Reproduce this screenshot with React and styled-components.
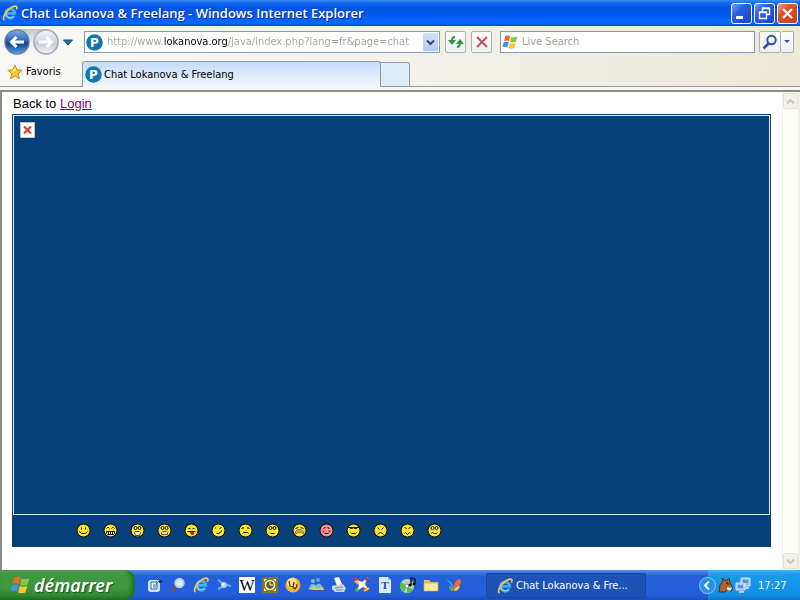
import React from 'react';
import styled, { createGlobalStyle } from 'styled-components';

const GlobalStyle = createGlobalStyle`
  * {
    box-sizing: border-box;
  }

  body {
    margin: 0;
    font-family: 'DejaVu Sans Condensed', 'DejaVu Sans', sans-serif;
    font-size: 11px;
    color: #000;
  }

  button {
    font: inherit;
    padding: 0;
    border: none;
    background: none;
  }

  svg {
    display: block;
    flex: none;
  }
`;

const Desktop = styled.div`
  display: flex;
  flex-direction: column;
  min-height: 100vh;
  background: white;
`;

const TitleBar = styled.header`
  display: flex;
  align-items: center;
  gap: 3px;
  height: 26px;
  padding: 0 2px 0 2px;
  background: linear-gradient(180deg, #3a8cf5 0%, #1468ee 12%, #0054e3 30%, #0058ec 55%, #0566ff 80%, #0566ff 90%, #0048d4 100%);
`;

const WindowTitle = styled.h1`
  flex: 1;
  margin: 0;
  font-family: 'Open Sans', sans-serif;
  font-size: 13px;
  font-weight: 600;
  line-height: 24px;
  color: white;
  text-shadow: 1px 1px 0 #0a2a8c;
  white-space: nowrap;
`;

const WindowButtons = styled.div`
  display: flex;
  gap: 2px;
`;

const WindowButton = styled.button`
  width: 21px;
  height: 21px;
  border: 1px solid white;
  border-radius: 3px;
  background: ${props => props.$close
    ? 'linear-gradient(135deg, #f0a080 0%, #e2552c 35%, #c83c10 100%)'
    : 'linear-gradient(135deg, #7ba0f4 0%, #2c5ee0 35%, #1a44cc 100%)'
  };
`;

const Toolbars = styled.div`
  background: linear-gradient(100deg, #f8f8f6 0%, #f3f2ec 45%, #ece9d8 100%);
`;

const NavBar = styled.div`
  display: flex;
  align-items: center;
  height: 32px;
  padding: 0 6px 0 4px;
`;

const Travel = styled.div`
  display: flex;
  align-items: center;
  gap: 4px;
  width: 80px;
`;

const TravelPair = styled.div`
  display: flex;
  gap: 3px;
  border-radius: 13px;
  background: linear-gradient(180deg, #c2c5c8, #f4f4f4 60%);
`;

const Field = styled.div`
  display: flex;
  align-items: center;
  flex: 1 1 ${props => props.$basis};
  min-width: 0;
  height: 22px;
  padding: 0 1px;
  gap: 4px;
  border: 1px solid #7f9db9;
  background: white;
`;

const FieldInput = styled.input`
  flex: 1;
  min-width: 0;
  padding: 0;
  border: none;
  outline: none;
  background: none;
  font: inherit;
  line-height: 18px;

  &::placeholder {
    color: #a3a198;
    opacity: 1;
  }
`;

// host name is drawn darker than the rest of the address
const UrlInput = styled(FieldInput)`
  color: transparent;
  background: linear-gradient(90deg, #a3a198 57px, #000 57px, #000 121px, #a3a198 121px);
  background-clip: text;
  -webkit-background-clip: text;
`;

const DropButton = styled.button`
  display: flex;
  align-items: center;
  justify-content: center;
  width: 15px;
  height: 18px;
  background: linear-gradient(180deg, #d3e0fb, #b4c9f5);
`;

const ToolButton = styled.button`
  display: flex;
  align-items: center;
  justify-content: center;
  width: ${props => props.$width || '21px'};
  height: 22px;
  border: 1px solid #aab0b4;
  border-radius: 2px;
  background: linear-gradient(180deg, #fdfdfb, #edf0f3);
`;

const PageTools = styled.div`
  display: flex;
  gap: 5px;
  margin: 0 8px 0 5px;
`;

const SearchTools = styled.div`
  display: flex;
  margin-left: 4px;

  button + button {
    border-left: none;
  }
`;

const TabRow = styled.nav`
  display: flex;
  align-items: flex-end;
  height: 29px;
`;

const Favorites = styled.button`
  display: flex;
  align-items: center;
  gap: 3px;
  width: 82px;
  height: 29px;
  padding: 0 0 1px 7px;
  border-bottom: 1px solid #919b9c;
`;

const Tab = styled.button`
  display: flex;
  align-items: center;
  gap: 2px;
  flex: 0 1 299px;
  height: 26px;
  padding-left: 2px;
  border: 1px solid #919b9c;
  border-bottom: none;
  border-radius: 3px 3px 0 0;
  background: linear-gradient(180deg, #c5dcfa, #f3f7fd);
`;

const NewTab = styled.button`
  width: 29px;
  height: 25px;
  border: 1px solid #919b9c;
  border-left: none;
  border-radius: 0 3px 0 0;
  background: #deebf8;
`;

const TabFiller = styled.div`
  flex: 1;
  height: 29px;
  border-bottom: 1px solid #919b9c;
`;

const TabBase = styled.div`
  height: 5px;
  background: #f5f6f6;
  border-bottom: 2px solid #8d8b82;
`;

const Viewport = styled.div`
  display: flex;
  flex: 1;
  border-left: 2px solid #8d8b82;
  border-right: 2px solid #f1efe2;
`;

const Page = styled.main`
  display: flex;
  flex-direction: column;
  flex: 1;
  padding: 4px 11px 23px 10px;
`;

const BackLine = styled.p`
  margin: 0 0 2px;
  padding-left: 1px;
  font-family: 'Liberation Sans', Arial, sans-serif;
  font-size: 13px;
  line-height: 16px;

  a {
    color: #800080;
  }
`;

const ChatPanel = styled.section`
  display: flex;
  flex-direction: column;
  flex: 1;
  padding: 1px;
  background: #084079;
`;

const ChatFrame = styled.div`
  flex: 1;
  padding: 6px;
  border: 1px solid #e4ecf4;
`;

const Smileys = styled.div`
  display: flex;
  align-items: center;
  gap: 12px;
  height: 31px;
  padding-left: 63px;
`;

const ScrollBar = styled.div`
  display: flex;
  flex-direction: column;
  justify-content: space-between;
  width: 16px;
  padding: 1px 0;
  background: #fdfdfa;
  border-left: 1px solid #f1f0ea;
`;

const ScrollButton = styled.button`
  display: flex;
  align-items: center;
  justify-content: center;
  width: 15px;
  height: 16px;
  border: 1px solid #e3e2d8;
  border-radius: 2px;
  background: #f3f2ea;
`;

const Taskbar = styled.footer`
  display: flex;
  align-items: stretch;
  height: 30px;
  background: linear-gradient(180deg, #4f92f2 0%, #3a78ea 8%, #245edb 20%, #2560dc 80%, #1c4cba 100%);
`;

const StartButton = styled.button`
  display: flex;
  align-items: center;
  gap: 4px;
  width: 135px;
  padding-left: 10px;
  border-radius: 0 10px 10px 0;
  background: linear-gradient(180deg, #6db56a 0%, #3f9a3f 14%, #3c963c 60%, #328732 85%, #226a22 100%);
  box-shadow: inset -3px 0 4px #1f6f24;
  color: white;
  font-family: 'Noto Sans', sans-serif;
  font-size: 18px;
  font-weight: 600;
  font-style: italic;
  line-height: 28px;
  text-shadow: 1px 1px 1px #1d4f1d;
`;

const QuickLaunch = styled.div`
  display: flex;
  align-items: center;
  flex: 0 0 351px;
  gap: 7px;
  padding-left: 12px;
`;

const TaskButton = styled.button`
  display: flex;
  align-items: center;
  gap: 3px;
  flex: 0 1 160px;
  height: 25px;
  margin-top: 3px;
  padding-left: 10px;
  border: 1px solid #1a43a4;
  border-radius: 2px;
  background: #1e52b7;
  color: white;
  white-space: nowrap;
`;

const Tray = styled.div`
  display: flex;
  align-items: center;
  gap: 2px;
  width: 92px;
  margin-left: auto;
  background: linear-gradient(180deg, #3fb4f6 0%, #179ceb 15%, #1290e8 80%, #0f78c8 100%);
  color: white;

  > button:first-child {
    margin-left: -9px;
  }
`;

const Clock = styled.time`
  margin-left: 5px;
`;

const IeLogo = ({ size = 16 }) => (
  <svg width={size} height={size} viewBox="0 0 16 16" fill="none">
    <path d="M12.2 10.9A4.6 4.6 0 1 1 12.8 8.4H5" stroke="#46a9f2" strokeWidth="2.8" />
    <path d="M11.4 11.2A4 4 0 0 1 4.2 9" stroke="#9bdcff" strokeWidth="1" />
    <path d="M2.500 15C-1 13 6 2.500 13 1.200c2.500-.2 2.300 1.600 1.300 3.300" stroke="#f6c944" strokeWidth="1.700" />
  </svg>
);

const SiteLogo = () => (
  <svg width="17" height="17" viewBox="0 0 17 17">
    <circle cx="8.500" cy="8.500" r="8.300" fill="#1675ac" />
    <text x="8.500" y="12.500" fill="white" fontFamily="DejaVu Sans" fontSize="12" fontWeight="700" textAnchor="middle">P</text>
  </svg>
);

const Flag = ({ size = 16 }) => (
  <svg width={size} height={size} viewBox="0 0 16 16">
    <path d="M3.300 2Q6 .7 8.200 2.200L7 7.300Q4.500 6 2 7.200z" fill="#ee6630" />
    <path d="M9.200 2.700Q12 4 15.500 2.500L14 7.800Q11 9 8 7.800z" fill="#8bc63e" />
    <path d="M1.700 8.200Q4.500 7 6.800 8.300L5.500 13.500Q3 12 .4 13.200z" fill="#4a90e8" />
    <path d="M7.800 8.800Q11 10 13.800 8.800L12.400 14Q9.500 15.300 6.500 14z" fill="#fbc62e" />
  </svg>
);

const TravelIcon = ({ forward }) => {
  const id = forward ? 'forward' : 'back';
  return (
    <svg width="26" height="26" viewBox="0 0 26 26">
      <defs>
        <linearGradient id={id} x1="0" y1="0" x2="0" y2="1">
          <stop offset="0" stopColor={forward ? '#f2f4f7' : '#86aee2'} />
          <stop offset=".45" stopColor={forward ? '#d3d9e0' : '#2864bb'} />
          <stop offset=".55" stopColor={forward ? '#c3cbd4' : '#123f93'} />
          <stop offset="1" stopColor={forward ? '#f4f6f8' : '#50a4e8'} />
        </linearGradient>
      </defs>
      <circle cx="13" cy="13" r="12" fill={`url(#${id})`} stroke={forward ? '#a2a9b1' : '#6d8097'} strokeWidth="1.500" />
      <path
        d={forward ? 'M6 13h12M13.500 8l5 5-5 5' : 'M20 13H8M12.500 8l-5 5 5 5'}
        fill="none"
        stroke="white"
        strokeWidth="3"
      />
    </svg>
  );
};

const Chevron = ({ up, color }) => (
  <svg width="9" height="7" viewBox="0 0 9 7" fill="none" stroke={color} strokeWidth="2">
    <path d={up ? 'M1 5.500l3.500-3.500L8 5.500' : 'M1 1.500L4.500 5 8 1.500'} />
  </svg>
);

const Magnifier = ({ lens = 'none', rim = '#2a50b4', handle = '#2a50b4' }) => (
  <svg width="16" height="16" viewBox="0 0 16 16">
    <path d="M7 9l-5.500 5.500" stroke={handle} strokeWidth="2.500" />
    <circle cx="9.500" cy="6" r="4.200" fill={lens} stroke={rim} strokeWidth="2" />
  </svg>
);

const RoundEyes = ({ fill = '#fff6a0' }) => (
  <>
    <circle cx="5" cy="4.500" r="1.500" fill={fill} />
    <circle cx="9" cy="4.500" r="1.500" fill={fill} />
  </>
);

const faces = [
  { name: 'Smile', art: <path d="M5 4v2M9 4v2M3 8l2 2h4l2-2" /> },
  { name: 'Grin', art: <><path d="M3 5l1-1h1l1 1M8 5l1-1h1l1 1" /><path d="M3 8h8v2l-1 1H4l-1-1z" fill="white" /><path d="M5 8v3M7 8v3M9 8v3" /></> },
  { name: 'Laugh', art: <><RoundEyes /><path d="M5 8h4l1 1-1 3H5L4 9z" fill="white" stroke="#5a4a10" /></> },
  { name: 'Shout', art: <><RoundEyes /><path d="M4 11V9l1-1h4l1 1v2z" fill="#efdff0" stroke="#7a5520" /></> },
  { name: 'Tongue', art: <><path d="M4 5h2M8 5h2M3 8h8" /><path d="M6 9h3v2H7z" fill="#e02818" stroke="#c01810" /></> },
  { name: 'Wink', art: <path d="M4 4v1M8 5l2-1M5 10h2l3-2V7" /> },
  { name: 'Sad', art: <path d="M3 5l2-1v1M11 5L9 4v1M4 10l1-1h4l1 1" /> },
  { name: 'Wonder', art: <><RoundEyes /><path d="M5 10h4" /></> },
  { name: 'Cry', art: <><path d="M3 5l3-1M8 4l3 1" /><path d="M3 11V8l2-2h4l2 2v3l-2-2H5z" fill="#c9a072" stroke="#b08040" /></> },
  { name: 'Blush', skin: '#f78f98', art: <><path d="M4 5l2-1M8 4l2 1M5 10h4" /><path d="M3 8h2M9 8h2" stroke="#cf2638" strokeWidth="2" /></> },
  { name: 'Cool', art: <><path d="M1 4h12" /><path d="M3 4h3v1H4zM8 4h3l-1 1H8z" fill="#000" /><path d="M4 9l1 1h4l1-1" /></> },
  { name: 'Angry', art: <path d="M4 4l2 2M10 4L8 6M4 11l1-1 2-1 2 1 1 1" /> },
  { name: 'Confused', art: <path d="M4 4l2 1M10 4L8 5M4 10l1-1 2 2 2-2 1 1" /> },
  { name: 'Dizzy', art: <><RoundEyes fill="white" /><path d="M4 10l1-1 2 1h2l1-1" /></> },
];

const Face = ({ skin = '#fbe52c', art }) => (
  <svg width="15" height="15" viewBox="-.5 -.5 15 15">
    <circle cx="7" cy="7" r="6.500" fill={skin} stroke="#0b0b08" strokeWidth="1" />
    <g fill="none" stroke="#16140a" strokeWidth="1">{art}</g>
  </svg>
);

const launchers = [
  {
    name: 'Desktop',
    art: <><rect x="1" y="3" width="12" height="12" rx="3" fill="#cfe8fa" /><path d="M4 5h6v7H4zM6 8h4M6 10h3M9 7l6-6" stroke="#246caa" fill="white" /><path d="M12 5l3-1" stroke="#222" strokeWidth="2" /></>,
  },
  { name: 'Search', icon: <Magnifier lens="#dceefb" rim="#b6cfe5" handle="#8a503c" /> },
  { name: 'Internet Explorer', icon: <IeLogo /> },
  {
    name: 'Satellite',
    art: <><path d="M2 3l4 3M11 8l4 1M2 12l4-2" stroke="#6ab0ee" strokeWidth="2" /><circle cx="8" cy="8" r="3" fill="#a8d0f3" /><circle cx="7" cy="7" r="1.500" fill="white" /></>,
  },
  {
    name: 'Wikipedia',
    art: <><rect width="16" height="16" fill="white" /><text x="8" y="13.500" fontFamily="Liberation Serif" fontSize="16" textAnchor="middle">W</text></>,
  },
  {
    name: 'Scheduler',
    art: <><rect width="16" height="16" fill="#847528" /><path d="M2 2h3L2 5zM14 2v3l-3-3zM2 14v-3l3 3zM14 14h-3l3-3z" fill="#fff8b0" /><circle cx="8" cy="8" r="4.500" fill="#665b20" stroke="#fff8d0" strokeWidth="1.500" /><path d="M8 5v3h3" stroke="white" fill="none" /></>,
  },
  {
    name: 'Doctor',
    art: <><circle cx="8" cy="8" r="7.500" fill="#f5b52c" /><circle cx="7" cy="6" r="5" fill="#ffe584" /><path d="M4 4l1 5 3 1 1-5M8 10l2 2 2-3-1-2" stroke="#5a3d18" strokeWidth="1.300" fill="none" /></>,
  },
  {
    name: 'Messenger',
    art: <><circle cx="5" cy="4" r="2" fill="#7cc5a7" /><circle cx="10" cy="3" r="2" fill="#4ba9ea" /><path d="M1 12q1-7 7-4 5-4 7 4z" fill="#76b9d3" /><path d="M0 12l6-3 3 2 6-1 1 3H5z" fill="#d3cb73" /></>,
  },
  {
    name: 'Printer',
    art: <><path d="M3 1l5-1 3 7-5 2z" fill="white" /><path d="M1 9l11-2 3 4-2 4H4l-3-3z" fill="#cad6e3" /><path d="M4 11l8-1M5 13h7" stroke="#7d8e9f" /></>,
  },
  {
    name: 'Paint',
    art: <><path d="M1 1l13 13" stroke="#eb3435" strokeWidth="3" /><path d="M14 1L2 14" stroke="#58b935" strokeWidth="3" /><path d="M3 3l5 2 4-3-1 5 3 5-5-2-5 3 1-5z" fill="white" /><path d="M1 4l4 3M10 14l5-3" stroke="#ffd600" strokeWidth="2" /><path d="M11 1l4 3" stroke="#b51b79" strokeWidth="2" /></>,
  },
  {
    name: 'Text editor',
    art: <><path d="M2 0h9l3 3v13H2z" fill="#dceafa" /><path d="M11 0v3h3" fill="#8cb3e4" /><text x="8" y="12" fontFamily="Liberation Serif" fontSize="11" fontWeight="700" fill="#284c82" textAnchor="middle">T</text></>,
  },
  {
    name: 'Music',
    art: <><circle cx="7" cy="9" r="7" fill="#b9d3b2" /><path d="M7 9L1 5A7 7 0 0 0 4 15zM7 9l6 4A7 7 0 0 1 7 16z" fill="#4ebf52" /><circle cx="7" cy="9" r="2" fill="white" stroke="#889" /><path d="M11 8V1l4 1v5" stroke="#081f2c" strokeWidth="1.500" fill="none" /><circle cx="10" cy="8" r="1.500" /><circle cx="14" cy="7" r="1.500" /></>,
  },
  {
    name: 'Folder',
    art: <><path d="M1 3h5l2 2h7v9H1z" fill="#e8bf50" /><path d="M1 6h14v8H1z" fill="#ffeaa0" stroke="#d7a63e" strokeWidth=".7" /></>,
  },
  {
    name: 'Butterfly',
    art: <><path d="M7 14Q5 6 0 3q6 0 8 8" fill="#2f9de2" /><path d="M7 14Q3 14 3 9l5 3" fill="#68b63d" /><path d="M8 13Q7 3 14 2q3 4-3 8" fill="#ef6734" /><path d="M8 14q1-5 6-5-1 5-6 5" fill="#f5c547" /></>,
  },
];

export default function App() {
  return (
    <Desktop>
      <GlobalStyle />
      <TitleBar>
        <IeLogo />
        <WindowTitle>Chat Lokanova &amp; Freelang - Windows Internet Explorer</WindowTitle>
        <WindowButtons>
          <WindowButton aria-label="Minimize">
            <svg width="19" height="19"><path d="M4 13.500h7" stroke="white" strokeWidth="3" /></svg>
          </WindowButton>
          <WindowButton aria-label="Restore">
            <svg width="19" height="19" fill="none" stroke="white">
              <path d="M4.500 8.500h7v6h-7zM4 8h8M7.500 8V4.500h7v6H12M7 4h8" strokeWidth="1.400" />
            </svg>
          </WindowButton>
          <WindowButton $close aria-label="Close">
            <svg width="19" height="19"><path d="M5 5l9 9M14 5l-9 9" stroke="white" strokeWidth="2.300" /></svg>
          </WindowButton>
        </WindowButtons>
      </TitleBar>

      <Toolbars>
        <NavBar>
          <Travel>
            <TravelPair>
              <button aria-label="Back"><TravelIcon /></button>
              <button aria-label="Forward"><TravelIcon forward /></button>
            </TravelPair>
            <button aria-label="Recent pages">
              <svg width="10" height="7"><path d="M.5 1h9L5 6z" fill="#2278b5" stroke="#1b4a79" /></svg>
            </button>
          </Travel>
          <Field $basis="356px">
            <SiteLogo />
            <UrlInput aria-label="Address" defaultValue="http://www.lokanova.org/java/index.php?lang=fr&page=chat" />
            <DropButton aria-label="Address history"><Chevron color="#33486e" /></DropButton>
          </Field>
          <PageTools>
            <ToolButton aria-label="Refresh">
              <svg width="16" height="16" viewBox="0 0 16 16" fill="none" stroke="#2c9444" strokeWidth="2">
                <path d="M7 3q-3 0-3 4M9 13q3 0 3-4" />
                <path d="M0 6h8l-4 5zM8 10h8l-4-5z" fill="#2c9444" stroke="none" />
              </svg>
            </ToolButton>
            <ToolButton aria-label="Stop">
              <svg width="12" height="12"><path d="M1 1l10 10M11 1L1 11" stroke="#c4505a" strokeWidth="2" /></svg>
            </ToolButton>
          </PageTools>
          <Field $basis="255px">
            <Flag />
            <FieldInput aria-label="Search" placeholder="Live Search" />
          </Field>
          <SearchTools>
            <ToolButton $width="22px" aria-label="Search"><Magnifier /></ToolButton>
            <ToolButton $width="13px" aria-label="Search options">
              <svg width="6" height="4"><path d="M0 0h6L3 3z" fill="#2a50b4" /></svg>
            </ToolButton>
          </SearchTools>
        </NavBar>
        <TabRow>
          <Favorites>
            <svg width="16" height="16" viewBox="0 0 16 16">
              <path d="M8 1l2 4.800 5.200.4-4 3.400 1.300 5.100L8 12l-4.500 2.700 1.300-5.100-4-3.400L6 5.800z" fill="#ffc73b" stroke="#cf8b18" />
              <path d="M8 3.500l1 3.300-4 .7z" fill="#fff0a6" />
            </svg>
            Favoris
          </Favorites>
          <Tab>
            <SiteLogo />
            Chat Lokanova &amp; Freelang
          </Tab>
          <NewTab aria-label="New tab" />
          <TabFiller />
        </TabRow>
        <TabBase />
      </Toolbars>

      <Viewport>
        <Page>
          <BackLine>
            Back to <a href="#login">Login</a>
          </BackLine>
          <ChatPanel>
            <ChatFrame>
              <svg width="15" height="16" role="img" aria-label="Applet not loaded">
                <path d="M.5.500h14v15H.5z" fill="white" stroke="#b9c3cc" />
                <path d="M4 4.500l7 7M11 4.500l-7 7" stroke="#d8352b" strokeWidth="2" />
              </svg>
            </ChatFrame>
            <Smileys>
              {faces.map(face => (
                <button key={face.name} aria-label={face.name}>
                  <Face skin={face.skin} art={face.art} />
                </button>
              ))}
            </Smileys>
          </ChatPanel>
        </Page>
        <ScrollBar>
          <ScrollButton aria-label="Scroll up"><Chevron up color="#c9c8bf" /></ScrollButton>
          <ScrollButton aria-label="Scroll down"><Chevron color="#c9c8bf" /></ScrollButton>
        </ScrollBar>
      </Viewport>

      <Taskbar>
        <StartButton>
          <Flag size={20} />
          démarrer
        </StartButton>
        <QuickLaunch>
          {launchers.map(item => (
            <button key={item.name} aria-label={item.name}>
              {item.icon || (
                <svg width="16" height="16" viewBox="0 0 16 16">{item.art}</svg>
              )}
            </button>
          ))}
        </QuickLaunch>
        <TaskButton>
          <IeLogo />
          Chat Lokanova &amp; Fre...
        </TaskButton>
        <Tray>
          <button aria-label="Show hidden icons">
            <svg width="17" height="17">
              <circle cx="8.500" cy="8.500" r="8" fill="#2890e8" stroke="#8ccafa" />
              <path d="M10 4.500l-4 4 4 4" fill="none" stroke="white" strokeWidth="2" />
            </svg>
          </button>
          <svg width="15" height="16" viewBox="0 0 15 16">
            <path d="M1 15L2 8 5 4 4 1l4 3 3-3 1 5 3 5-2 3-4-1-2 2z" fill="#ad6536" stroke="#522f1c" />
            <path d="M9 10l5 1-2 3-3-1z" fill="#f4e5d3" />
            <path d="M8 6h2v2" stroke="#241510" fill="none" />
          </svg>
          <svg width="16" height="16" viewBox="0 0 16 16">
            <path d="M6 1h9v8H6zM1 6h9v7H1z" fill="#91c5f5" stroke="#d5e6f8" />
            <path d="M8 3h5v3H8zM3 8h5v3H3z" fill="#5e8bdc" />
            <path d="M4 15h5M10 11h4" stroke="#d6c5df" strokeWidth="2" />
          </svg>
          <Clock>17:27</Clock>
        </Tray>
      </Taskbar>
    </Desktop>
  );
}
